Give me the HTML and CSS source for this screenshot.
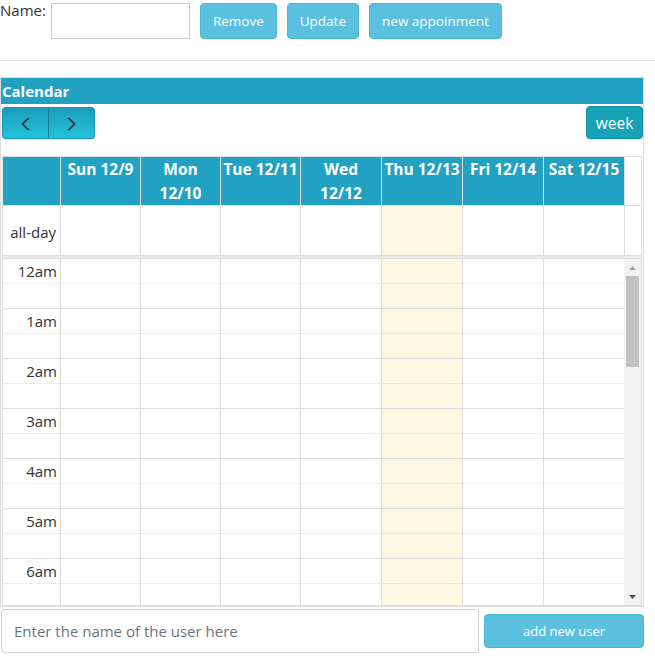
FILE: index.html
```html
<!DOCTYPE html>
<html>
<head>
<meta charset="utf-8">
<link rel="stylesheet" href="styles.css">
</head>
<body>
<div class="topbar">
  <label class="name-label">Name:</label>
  <input class="name-input" type="text">
  <button class="btn">Remove</button>
  <button class="btn">Update</button>
  <button class="btn">new appoinment</button>
</div>
<hr class="divider">
<div class="cal">
  <div class="cal-title">Calendar</div>
  <div class="cal-toolbar">
    <div class="nav-group">
      <button class="nav-btn nav-prev"><svg width="9" height="14" viewBox="0 0 9 14"><polyline points="7.5,1 1.5,7 7.5,13" fill="none" stroke="#2a2a2a" stroke-width="1.7"/></svg></button>
      <button class="nav-btn nav-next"><svg width="9" height="14" viewBox="0 0 9 14"><polyline points="1.5,1 7.5,7 1.5,13" fill="none" stroke="#2a2a2a" stroke-width="1.7"/></svg></button>
    </div>
    <button class="week-btn">week</button>
  </div>
  <div class="grid">
    <div class="head-row">
      <div class="hcell"></div>
      <div class="hcell">Sun 12/9</div>
      <div class="hcell">Mon<br>12/10</div>
      <div class="hcell">Tue 12/11</div>
      <div class="hcell">Wed<br>12/12</div>
      <div class="hcell">Thu 12/13</div>
      <div class="hcell">Fri 12/14</div>
      <div class="hcell">Sat 12/15</div>
      <div class="hcell gutter"></div>
    </div>
    <div class="allday-row">
      <div class="acell axis">all-day</div>
      <div class="acell"></div>
      <div class="acell"></div>
      <div class="acell"></div>
      <div class="acell"></div>
      <div class="acell today"></div>
      <div class="acell"></div>
      <div class="acell"></div>
      <div class="acell gutter"></div>
    </div>
    <div class="sep"></div>
    <div class="time-area">
      <div class="slots">
        <div class="cols">
          <div class="col"></div>
          <div class="col"></div>
          <div class="col"></div>
          <div class="col"></div>
          <div class="col"></div>
          <div class="col today"></div>
          <div class="col"></div>
          <div class="col last"></div>
        </div>
        <div class="rows">
          <div class="slot"><span class="slot-label">12am</span></div>
          <div class="slot hour-end"></div>
          <div class="slot"><span class="slot-label">1am</span></div>
          <div class="slot hour-end"></div>
          <div class="slot"><span class="slot-label">2am</span></div>
          <div class="slot hour-end"></div>
          <div class="slot"><span class="slot-label">3am</span></div>
          <div class="slot hour-end"></div>
          <div class="slot"><span class="slot-label">4am</span></div>
          <div class="slot hour-end"></div>
          <div class="slot"><span class="slot-label">5am</span></div>
          <div class="slot hour-end"></div>
          <div class="slot"><span class="slot-label">6am</span></div>
          <div class="slot hour-end"></div>
        </div>
      </div>
      <div class="scrollbar">
        <div class="sb-btn"><svg width="7" height="4" viewBox="0 0 7 4"><polygon points="0,4 3.5,0 7,4" fill="#a3a3a3"/></svg></div>
        <div class="sb-thumb"></div>
        <div class="sb-space"></div>
        <div class="sb-btn"><svg width="7" height="4" viewBox="0 0 7 4"><polygon points="0,0 7,0 3.5,4" fill="#505050"/></svg></div>
      </div>
    </div>
  </div>
</div>
<div class="adduser">
  <input class="user-input" type="text" placeholder="Enter the name of the user here">
  <button class="btn add-btn">add new user</button>
</div>
</body>
</html>
```
FILE: styles.css
```css
body {
  margin: 0;
  font-family: "Open Sans", "Noto Sans", sans-serif;
  font-size: 15px;
  color: #333;
  background: #fff;
}

.topbar {
  display: flex;
  align-items: flex-start;
}

.name-label {
  line-height: 20px;
  margin-right: 5px;
}

.name-input {
  margin-top: 3px;
  width: 139px;
  height: 36px;
  box-sizing: border-box;
  border: 1px solid #ccc;
  border-radius: 0;
  padding: 0 6px;
  font: inherit;
}

.btn {
  height: 36px;
  margin-top: 3px;
  margin-left: 10px;
  padding: 0 12px;
  border: 1px solid #46b8da;
  border-radius: 4px;
  background: #5bc0de;
  color: #fff;
  font-family: "Open Sans", sans-serif;
  font-size: 13.5px;
  line-height: 34px;
  cursor: pointer;
}

.divider {
  margin: 21px 0 0;
  border: 0;
  border-top: 1px solid #e5e5e5;
  height: 0;
}

.cal {
  margin-top: 16px;
  width: 644px;
  box-sizing: border-box;
  border: 1px solid #ddd;
}

.cal-title {
  height: 26px;
  line-height: 26px;
  background: #22a2c3;
  color: #fff;
  font-weight: 700;
  font-size: 15px;
  padding-left: 1px;
}

.cal-toolbar {
  height: 52px;
  display: flex;
  justify-content: space-between;
  align-items: flex-start;
}

.nav-group {
  display: flex;
  margin: 3px 0 0 1px;
}

.nav-btn {
  height: 32px;
  padding: 0;
  display: flex;
  align-items: center;
  justify-content: center;
  background: linear-gradient(#1c9dbc, #23c2da);
  border: 1px solid #1a93b0;
  box-shadow: 0 1px 1px rgba(0,0,0,0.12);
}

.nav-prev {
  width: 46px;
  border-right: 0;
  border-radius: 4px 0 0 4px;
}

.nav-next {
  width: 47px;
  border-left: 1px solid #17819a;
  border-radius: 0 4px 4px 0;
}

.nav-btn svg {
  margin-top: 2px;
}

.week-btn {
  margin-top: 2px;
  width: 57px;
  height: 33px;
  padding: 0;
  background: #17a2b8;
  border: 1px solid #148d9f;
  border-radius: 4px;
  color: #fff;
  font-family: "Open Sans", sans-serif;
  font-size: 15.5px;
  box-shadow: 0 1px 1px rgba(0,0,0,0.12);
}

.grid {
  margin: 0 1px;
  border: 1px solid #ddd;
}

.head-row,
.allday-row {
  display: grid;
  grid-template-columns: 58px 80px 80px 80px 81px 81px 81px 81px 16px;
  border-bottom: 1px solid #ddd;
}

.hcell {
  background: #22a2c3;
  color: #fff;
  font-weight: 700;
  font-size: 15.5px;
  line-height: 24px;
  min-height: 48px;
  text-align: center;
  white-space: nowrap;
  border-right: 1px solid #ddd;
}

.hcell.gutter {
  background: #fff;
  border-right: 0;
}

.allday-row {
  grid-template-rows: 49px;
}

.acell {
  border-right: 1px solid #ddd;
}

.acell.axis {
  text-align: right;
  padding: 14px 4px 0 0;
  line-height: 24px;
}

.acell.gutter {
  border-right: 0;
}

.today {
  background: #fcf8e3;
}

.sep {
  height: 2px;
  background: #ebebeb;
  border-bottom: 1px solid #ddd;
}

.time-area {
  display: flex;
  height: 346px;
  overflow: hidden;
}

.slots {
  width: 621px;
  height: 346px;
  overflow: hidden;
  display: grid;
}

.cols,
.rows {
  grid-area: 1 / 1;
}

.cols {
  display: grid;
  grid-template-columns: 58px 80px 80px 80px 81px 81px 81px 80px;
}

.col {
  border-right: 1px solid #ddd;
}

.col.last {
  border-right: 0;
}

.slot {
  height: 25px;
  box-sizing: border-box;
  border-bottom: 1px dotted #ddd;
}

.slot.hour-end {
  border-bottom-style: solid;
}

.slot-label {
  display: block;
  width: 58px;
  box-sizing: border-box;
  text-align: right;
  padding-right: 4px;
  line-height: 24px;
}

.scrollbar {
  width: 17px;
  height: 346px;
  background: #f1f1f1;
  display: flex;
  flex-direction: column;
}

.sb-btn {
  height: 17px;
  display: flex;
  align-items: center;
  justify-content: center;
}

.sb-thumb {
  width: 13px;
  height: 91px;
  margin-left: 2px;
  background: #c1c1c1;
}

.sb-space {
  flex: 1;
}

.adduser {
  display: flex;
  align-items: center;
  margin-top: 2px;
  padding-left: 1px;
}

.user-input {
  width: 478px;
  height: 44px;
  box-sizing: border-box;
  border: 1px solid #ced4da;
  border-radius: 4px 0 0 4px;
  padding: 0 12px;
  font-family: "Open Sans", sans-serif;
  font-size: 15px;
  color: #495057;
}

.user-input::placeholder {
  color: #6c757d;
}

.add-btn {
  margin: 0 0 0 5px;
  width: 160px;
  height: 34px;
  line-height: 32px;
  font-size: 13px;
}
```
